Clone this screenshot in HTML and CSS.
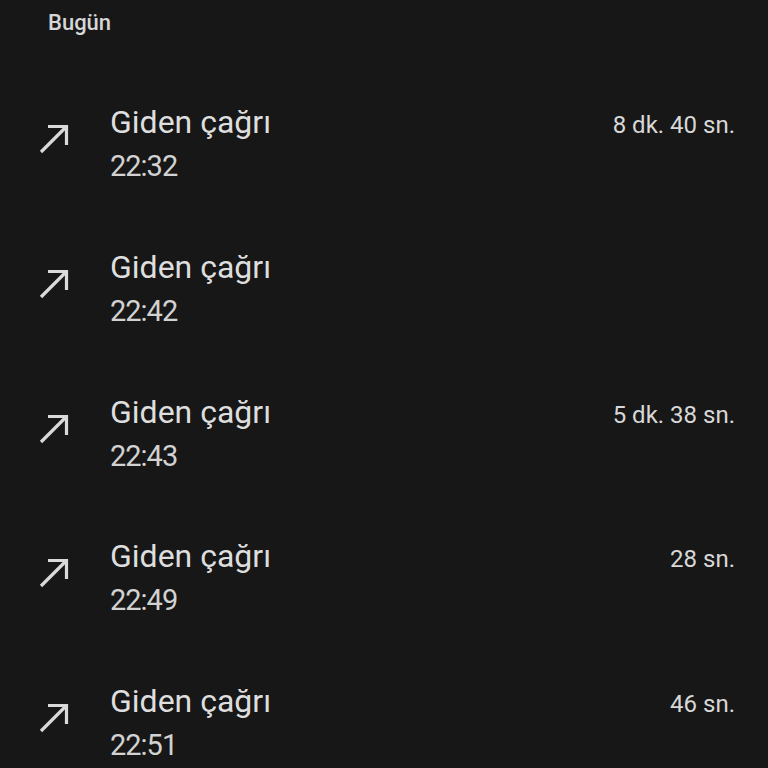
FILE: index.html
```html
<!DOCTYPE html>
<html lang="tr">
<head>
<meta charset="utf-8">
<title>Arama geçmişi</title>
<link rel="stylesheet" href="styles.css">
</head>
<body>
<div class="screen">
  <div class="section-header">Bugün</div>
  <ul class="call-list">
    <li class="call-row">
      <span class="call-icon"><svg viewBox="0 0 30 30" width="30" height="30"><polyline points="9,2.5 27.5,2.5 27.5,21"/><line x1="27.5" y1="2.5" x2="2" y2="28"/></svg></span>
      <div class="call-text"><div class="call-title">Giden çağrı</div><div class="call-time">22:32</div></div>
      <div class="call-duration">8 dk. 40 sn.</div>
    </li>
    <li class="call-row">
      <span class="call-icon"><svg viewBox="0 0 30 30" width="30" height="30"><polyline points="9,2.5 27.5,2.5 27.5,21"/><line x1="27.5" y1="2.5" x2="2" y2="28"/></svg></span>
      <div class="call-text"><div class="call-title">Giden çağrı</div><div class="call-time">22:42</div></div>
      <div class="call-duration"></div>
    </li>
    <li class="call-row">
      <span class="call-icon"><svg viewBox="0 0 30 30" width="30" height="30"><polyline points="9,2.5 27.5,2.5 27.5,21"/><line x1="27.5" y1="2.5" x2="2" y2="28"/></svg></span>
      <div class="call-text"><div class="call-title">Giden çağrı</div><div class="call-time">22:43</div></div>
      <div class="call-duration">5 dk. 38 sn.</div>
    </li>
    <li class="call-row">
      <span class="call-icon"><svg viewBox="0 0 30 30" width="30" height="30"><polyline points="9,2.5 27.5,2.5 27.5,21"/><line x1="27.5" y1="2.5" x2="2" y2="28"/></svg></span>
      <div class="call-text"><div class="call-title">Giden çağrı</div><div class="call-time">22:49</div></div>
      <div class="call-duration">28 sn.</div>
    </li>
    <li class="call-row">
      <span class="call-icon"><svg viewBox="0 0 30 30" width="30" height="30"><polyline points="9,2.5 27.5,2.5 27.5,21"/><line x1="27.5" y1="2.5" x2="2" y2="28"/></svg></span>
      <div class="call-text"><div class="call-title">Giden çağrı</div><div class="call-time">22:51</div></div>
      <div class="call-duration">46 sn.</div>
    </li>
  </ul>
</div>
</body>
</html>
```
FILE: styles.css
```css
html, body {
  margin: 0;
  padding: 0;
  background: #171717;
}
body {
  font-family: Roboto, "Noto Sans", "Liberation Sans", sans-serif;
  color: #dcdcdc;
  width: 768px;
  height: 768px;
  overflow: hidden;
}
.screen {
  width: 768px;
  height: 768px;
  overflow: hidden;
}
.section-header {
  padding: 11px 0 0 48px;
  font-size: 22px;
  line-height: 24px;
  font-weight: 500;
  color: #d6d6d6;
}
.call-list {
  list-style: none;
  margin: 36px 0 0 0;
  padding: 0;
}
.call-row {
  box-sizing: border-box;
  height: 144.75px;
  padding: 31px 33px 0 39px;
  display: flex;
  align-items: flex-start;
}
.call-icon {
  width: 71px;
  flex: none;
  margin-top: 22px;
  display: flex;
}
.call-icon svg {
  fill: none;
  stroke: #dadada;
  stroke-width: 3.2;
}
.call-text {
  flex: 1;
}
.call-title {
  font-size: 32px;
  line-height: 41px;
  color: #dedede;
}
.call-time {
  font-size: 29px;
  line-height: 42px;
  margin-top: 2px;
  letter-spacing: -1px;
  color: #d2d2d2;
}
.call-duration {
  font-size: 24px;
  line-height: 41px;
  color: #d8d8d8;
  text-align: right;
  margin-top: 3px;
}
```
